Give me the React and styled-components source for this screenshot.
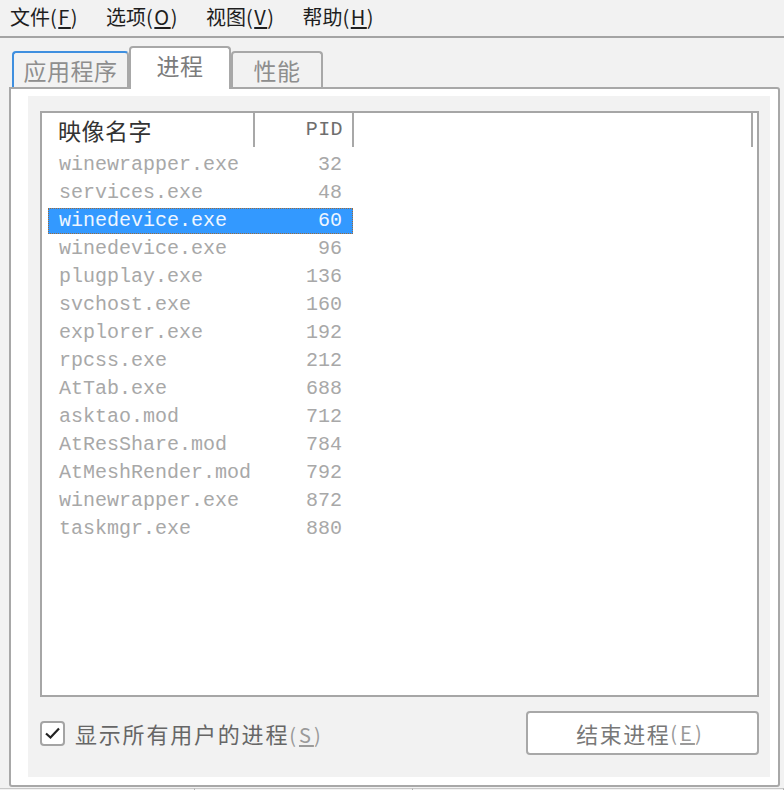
import React, { useState } from 'react';
import styled, { createGlobalStyle, css } from 'styled-components';

// #region styles
const GlobalStyle = createGlobalStyle`
  html, body {
    margin: 0;
    padding: 0;
    background: #f2f2f2;
    overflow: hidden;
  }
  * {
    box-sizing: border-box;
  }
`;

const cjk = `"Noto Sans CJK SC", "Noto Sans", sans-serif`;
const mono = `"Liberation Mono", "DejaVu Sans Mono", monospace`;

const Window = styled.div`
  width: 784px;
  height: 790px;
  display: flex;
  flex-direction: column;
  font-family: ${cjk};
`;

const MenuBar = styled.div`
  height: 38px;
  flex: none;
  display: flex;
  align-items: center;
  gap: 27px;
  padding: 0 0 2px 10px;
  border-bottom: 2px solid #a4a4a4;
`;

const MenuItem = styled.span`
  font-size: 20px;
  line-height: 1;
  color: #1e1e1e;
`;

const MenuParen = styled.span`
  letter-spacing: 1.5px;
`;

const Mnemonic = styled.span`
  text-decoration: underline;
  text-underline-offset: 2px;
`;

const TabArea = styled.div`
  flex: none;
  padding: 8px 3px 0 9px;
  display: flex;
  flex-direction: column;
`;

const TabStrip = styled.div`
  height: 41px;
  display: flex;
  align-items: flex-end;
  padding-left: 3px;
`;

const Tab = styled.div`
  width: ${p => p.w}px;
  height: 36px;
  display: flex;
  align-items: center;
  justify-content: center;
  font-size: 23px;
  color: #8e8e8e;
  background: #f2f2f2;
  border: 2px solid #a8a8a8;
  border-bottom: none;
  border-radius: 4px 4px 0 0;
  line-height: 1;
  letter-spacing: 0.5px;

  ${p =>
    p.focused &&
    css`
      border-top-color: #3f8fdf;
      border-left-color: #3f8fdf;
    `}

  ${p =>
    p.active &&
    css`
      height: 43px;
      margin-bottom: -2px;
      background: #fff;
      color: #7c7c7c;
      position: relative;
      z-index: 1;
      padding-bottom: 6px;
    `}
`;

const Panel = styled.div`
  width: 771px;
  height: 700px;
  background: #fff;
  border: 2px solid #a8a8a8;
  border-radius: 0 3px 3px 3px;
  padding: 7px 8px 8px 17px;
`;

const Content = styled.div`
  height: 100%;
  background: #f2f2f2;
  padding: 15px 11px 0 12px;
  display: flex;
  flex-direction: column;
`;

const ListView = styled.div`
  height: 586px;
  flex: none;
  background: #fff;
  border: 2px solid #a6a6a6;
  display: flex;
  flex-direction: column;
`;

const Header = styled.div`
  height: 38px;
  flex: none;
  display: flex;
  align-items: flex-start;
`;

const HeaderCell = styled.div`
  width: ${p => p.w}px;
  height: 34px;
  display: flex;
  align-items: center;
  justify-content: ${p => (p.right ? 'flex-end' : 'flex-start')};
  padding: ${p => (p.right ? '0 9px 0 0' : '0 0 0 16px')};
  border-right: 2px solid #a8a8a8;
  flex: ${p => (p.fill ? '1' : 'none')};
  margin-right: ${p => (p.fill ? '4px' : '0')};
`;

const HeaderLabel = styled.span`
  font-family: ${p => (p.mono ? mono : cjk)};
  font-size: ${p => (p.mono ? '20px' : '23px')};
  color: ${p => (p.mono ? '#6e6e6e' : '#333')};
  letter-spacing: ${p => (p.mono ? '0.4px' : '0.5px')};
  line-height: 1;
`;

const Rows = styled.div`
  display: flex;
  flex-direction: column;
  padding-left: 6px;
`;

const Row = styled.div`
  width: 305px;
  height: 28px;
  display: flex;
  align-items: center;
  justify-content: space-between;
  padding: 0 10px 0 10px;
  font-family: ${mono};
  font-size: 20px;
  line-height: 1;
  color: #a8a8a8;
  border: 1px solid transparent;

  ${p =>
    p.selected &&
    css`
      background: #3399ff;
      color: #eef6ff;
      border: 1px dotted #9c6a3c;
      height: 26px;
      margin: 1px 0;
    `}
`;

const Footer = styled.div`
  display: flex;
  align-items: center;
  justify-content: space-between;
  margin-top: 14px;
`;

const CheckLabel = styled.label`
  display: flex;
  align-items: center;
  gap: 10px;
  font-size: 22px;
  color: #666;
  letter-spacing: 1.8px;
  line-height: 1;
`;

const CheckBox = styled.span`
  width: 25px;
  height: 25px;
  border: 2px solid #a4a4a4;
  border-radius: 4px;
  background: #fff;
  display: flex;
  align-items: center;
  justify-content: center;
`;

const Paren = styled.span`
  color: #9a9a9a;
  font-size: 20px;
  letter-spacing: 3px;
`;

const Button = styled.button`
  width: 233px;
  height: 44px;
  background: #fff;
  border: 2px solid #a8a8a8;
  border-radius: 4px;
  font-family: ${cjk};
  font-size: 22px;
  color: #787878;
  letter-spacing: 1.5px;
  line-height: 1;
  padding: 0 4px 0 0;
  display: flex;
  align-items: center;
  justify-content: center;
`;

const StatusBar = styled.div`
  height: 24px;
  flex: none;
  display: flex;
  margin-top: 1px;
`;

const StatusCell = styled.div`
  width: ${p => p.w}px;
  border-right: 1px solid #b0b0b0;
  border-top: 1px solid #c8c8c8;
`;
// #endregion

const PROCESSES = [
  ['winewrapper.exe', 32],
  ['services.exe', 48],
  ['winedevice.exe', 60],
  ['winedevice.exe', 96],
  ['plugplay.exe', 136],
  ['svchost.exe', 160],
  ['explorer.exe', 192],
  ['rpcss.exe', 212],
  ['AtTab.exe', 688],
  ['asktao.mod', 712],
  ['AtResShare.mod', 784],
  ['AtMeshRender.mod', 792],
  ['winewrapper.exe', 872],
  ['taskmgr.exe', 880]
];

const MENUS = [
  ['文件', 'F'],
  ['选项', 'O'],
  ['视图', 'V'],
  ['帮助', 'H']
];

const App = () => {
  const [selected, setSelected] = useState(2);

  return (
    <Window>
      <GlobalStyle />
      <MenuBar>
        {MENUS.map(([label, key]) => (
          <MenuItem key={key}>
            {label}
            <MenuParen>
              (<Mnemonic>{key}</Mnemonic>)
            </MenuParen>
          </MenuItem>
        ))}
      </MenuBar>

      <TabArea>
        <TabStrip>
          <Tab w={117} focused>
            应用程序
          </Tab>
          <Tab w={102} active>
            进程
          </Tab>
          <Tab w={92}>性能</Tab>
        </TabStrip>

        <Panel>
          <Content>
            <ListView>
              <Header>
                <HeaderCell w={213}>
                  <HeaderLabel>映像名字</HeaderLabel>
                </HeaderCell>
                <HeaderCell w={99} right>
                  <HeaderLabel mono>PID</HeaderLabel>
                </HeaderCell>
                <HeaderCell fill />
              </Header>
              <Rows>
                {PROCESSES.map(([name, pid], i) => (
                  <Row
                    key={`${name}-${pid}`}
                    selected={i === selected}
                    onClick={() => setSelected(i)}
                  >
                    <span>{name}</span>
                    <span>{pid}</span>
                  </Row>
                ))}
              </Rows>
            </ListView>

            <Footer>
              <CheckLabel>
                <CheckBox>
                  <svg width="17" height="14" viewBox="0 0 17 14">
                    <path
                      d="M2 7.5 L6.5 11.5 L15 2.5"
                      fill="none"
                      stroke="#222"
                      strokeWidth="2.2"
                    />
                  </svg>
                </CheckBox>
                <span>
                  显示所有用户的进程
                  <Paren>
                    (<Mnemonic>S</Mnemonic>)
                  </Paren>
                </span>
              </CheckLabel>
              <Button type="button">
                结束进程
                <Paren>
                  (<Mnemonic>E</Mnemonic>)
                </Paren>
              </Button>
            </Footer>
          </Content>
        </Panel>
      </TabArea>

      <StatusBar>
        <StatusCell w={195} />
        <StatusCell w={218} />
        <StatusCell w={371} />
      </StatusBar>
    </Window>
  );
};

export default App;
